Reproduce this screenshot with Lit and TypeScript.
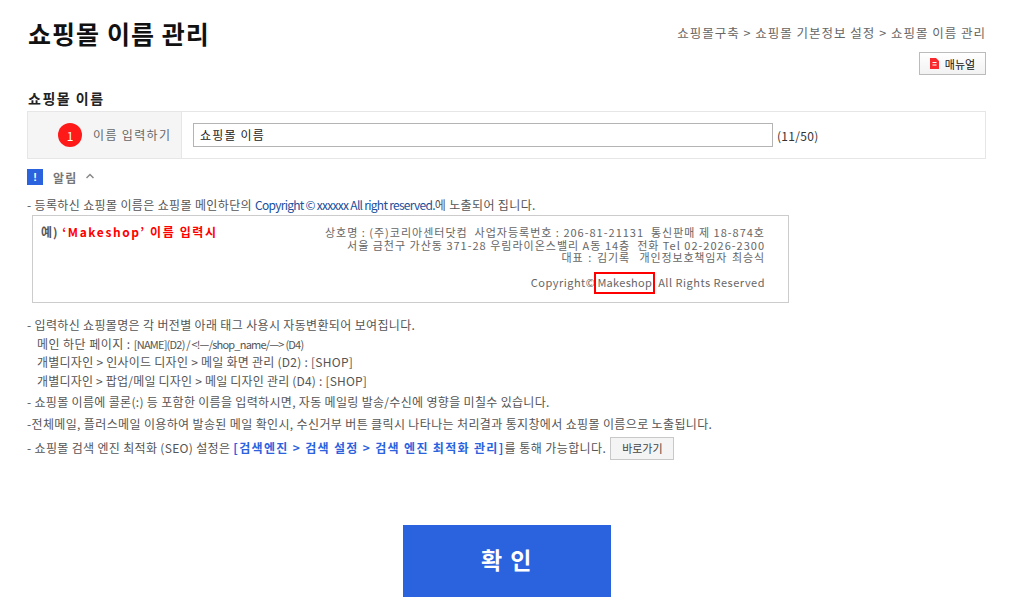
import { LitElement, html, css } from "lit";
import { customElement } from "lit/decorators.js";

@customElement("app-root")
export class AppRoot extends LitElement {
  static styles = css`
    :host { display: block; width: 1014px; height: 614px; overflow: hidden; background: #fff; font-family: "Noto Sans CJK KR", "Liberation Sans", sans-serif; color: #555; }
    .page { padding: 0 28px 0 27px; display: flex; flex-direction: column; }
    .head { display: flex; justify-content: space-between; align-items: flex-start; height: 88px; }
    h1 { margin: 14px 0 0 1px; font-size: 25px; line-height: 38px; font-weight: 700; color: #111; letter-spacing: 1.05px; white-space: nowrap; }
    .right { display: flex; flex-direction: column; align-items: flex-end; }
    .crumb { margin-top: 25px; font-size: 12.5px; line-height: 16px; color: #666; letter-spacing: 1px; white-space: nowrap; }
    .manual { margin-top: 11px; width: 67px; height: 23px; box-sizing: border-box; border: 1px solid #bbb; background: linear-gradient(#fff, #f2f2f2); display: flex; align-items: center; justify-content: center; gap: 6px; font-size: 11px; color: #111; }
    h2 { margin: 0 0 0 1px; font-size: 14px; line-height: 20px; font-weight: 700; color: #222; height: 23px; letter-spacing: 1.5px; }
    .row { display: flex; height: 48px; box-sizing: border-box; border: 1px solid #e6e6e6; }
    .label { width: 154px; box-sizing: border-box; background: #f5f5f5; border-right: 1px solid #e6e6e6; display: flex; align-items: center; padding-left: 30px; gap: 11px; font-size: 12px; color: #666; white-space: nowrap; letter-spacing: 1.35px; }
    .label span:last-child { padding-bottom: 2px; }
    .num { width: 24px; height: 24px; border-radius: 50%; background: #ff1a1a; color: #fff; font-size: 12px; display: flex; align-items: center; justify-content: center; flex: none; letter-spacing: 0; }
    .field { display: flex; align-items: center; padding-left: 11px; gap: 4px; font-size: 12px; color: #333; letter-spacing: 0.3px; }
    .input { width: 580px; height: 24px; box-sizing: border-box; border: 1px solid #b4b4b4; display: flex; align-items: center; padding: 0 0 2px 6px; font-size: 12px; color: #222; letter-spacing: 1.2px; }
    .notice { display: flex; align-items: center; height: 18px; margin-top: 9px; }
    .bang { width: 16px; height: 16px; background: #2b62de; color: #fff; font-size: 11px; font-weight: 700; display: flex; align-items: center; justify-content: center; font-family: "Liberation Sans", sans-serif; }
    .notice b { margin-left: 10px; font-size: 12px; color: #777; letter-spacing: 1.3px; }
    .notice svg { margin: 0 0 2px 8px; }
    .line { font-size: 12px; line-height: 19px; height: 19px; color: #555; white-space: nowrap; }
    .first { margin-top: 9px; letter-spacing: 0.36px; }
    .indent { padding-left: 10px; }
    .blue { color: #1a4f9c; letter-spacing: -0.72px; }
    .example { margin: 1px 0 0 5px; width: 757px; height: 88px; box-sizing: border-box; border: 1px solid #ccc; display: flex; justify-content: space-between; padding: 6px 23px 0 8px; }
    .eg { font-size: 12px; line-height: 20px; font-weight: 700; color: #555; white-space: nowrap; letter-spacing: 1px; }
    .eg span { color: #f00; letter-spacing: 1.6px; }
    .co { text-align: right; font-size: 11px; line-height: 12.5px; color: #666; padding-top: 4px; white-space: nowrap; letter-spacing: 1px; }
    .c3 { letter-spacing: 0.85px; word-spacing: 1.5px; }
    .cr { margin-top: 8px; display: flex; justify-content: flex-end; align-items: center; height: 22px; letter-spacing: 0.5px; }
    .mark { border: 2px solid #f00; height: 22px; box-sizing: border-box; padding: 0 1px; display: flex; align-items: center; margin: 0 3px 0 -1px; letter-spacing: 0.3px; }
    .notes { margin-top: 12px; display: flex; flex-direction: column; }
    .n1 { letter-spacing: 0.34px; }
    .n2 { letter-spacing: 0.45px; }
    .n2 .tight { font-size: 11px; letter-spacing: -0.78px; }
    .n3 { letter-spacing: 0.25px; margin-top: -1px; }
    .n4 { letter-spacing: 0.2px; }
    .n5 { letter-spacing: 0.32px; margin-top: 2px; }
    .n6 { letter-spacing: 0.36px; margin-top: 3px; }
    .n7 { letter-spacing: 0.33px; margin-top: 4px; }
    .n7 .after { letter-spacing: 0.42px; }
    .seo { color: #2b62de; font-weight: 700; letter-spacing: 1.33px; }
    .go { display: inline-flex; align-items: center; justify-content: center; width: 64px; height: 23px; box-sizing: border-box; border: 1px solid #c8c8c8; background: #f4f4f4; font-size: 11px; color: #444; margin: 0 0 2px 1px; vertical-align: middle; letter-spacing: 0; }
    .ok { align-self: flex-start; margin: 69px 0 0 376px; width: 208px; height: 72px; box-sizing: border-box; padding-bottom: 4px; background: #2b62de; color: #fff; font-size: 23px; font-weight: 700; display: flex; align-items: center; justify-content: center; letter-spacing: 1.5px; }
  `;

  render() {
    return html`<div class="page">
      <div class="head">
        <h1>쇼핑몰 이름 관리</h1>
        <div class="right">
          <div class="crumb">쇼핑몰구축 &gt; 쇼핑몰 기본정보 설정 &gt; 쇼핑몰 이름 관리</div>
          <div class="manual">
            <svg width="9" height="11" viewBox="0 0 9 11"><path d="M0 0H6L9 3V11H0Z" fill="#f8282c"/><path d="M2.5 4.5H6.5M2.5 7H6.5" stroke="#fff" stroke-width="1"/></svg>
            <span>매뉴얼</span>
          </div>
        </div>
      </div>
      <h2>쇼핑몰 이름</h2>
      <div class="row">
        <div class="label"><span class="num">1</span><span>이름 입력하기</span></div>
        <div class="field"><div class="input">쇼핑몰 이름</div><span>(11/50)</span></div>
      </div>
      <div class="notice">
        <span class="bang">!</span><b>알림</b>
        <svg width="8" height="6" viewBox="0 0 8 6"><path d="M0.5 5L4 1.5L7.5 5" fill="none" stroke="#888" stroke-width="1.5"/></svg>
      </div>
      <div class="line first">- 등록하신 쇼핑몰 이름은 쇼핑몰 메인하단의 <span class="blue">Copyright © xxxxxx All right reserved.</span>에 노출되어 집니다.</div>
      <div class="example">
        <div class="eg">예) <span>‘Makeshop’ 이름 입력시</span></div>
        <div class="co">
          <div>상호명 : (주)코리아센터닷컴 &nbsp;사업자등록번호 : 206-81-21131 &nbsp;통신판매 제 18-874호</div>
          <div>서울 금천구 가산동 371-28 우림라이온스밸리 A동 14층 &nbsp;전화 Tel 02-2026-2300</div>
          <div class="c3">대표 : 김기록 &nbsp;개인정보호책임자 최승식</div>
          <div class="cr">Copyright©<span class="mark">Makeshop</span> All Rights Reserved</div>
        </div>
      </div>
      <div class="notes">
        <div class="line n1">- 입력하신 쇼핑몰명은 각 버전별 아래 태그 사용시 자동변환되어 보여집니다.</div>
        <div class="line indent n2">메인 하단 페이지 : <span class="tight">[NAME](D2) / &lt;!—/shop_name/—&gt; (D4)</span></div>
        <div class="line indent n3">개별디자인 &gt; 인사이드 디자인 &gt; 메일 화면 관리 (D2) : [SHOP]</div>
        <div class="line indent n4">개별디자인 &gt; 팝업/메일 디자인 &gt; 메일 디자인 관리 (D4) : [SHOP]</div>
        <div class="line n5">- 쇼핑몰 이름에 콜론(:) 등 포함한 이름을 입력하시면, 자동 메일링 발송/수신에 영향을 미칠수 있습니다.</div>
        <div class="line n6">-전체메일, 플러스메일 이용하여 발송된 메일 확인시, 수신거부 버튼 클릭시 나타나는 처리결과 통지창에서 쇼핑몰 이름으로 노출됩니다.</div>
        <div class="line n7">- 쇼핑몰 검색 엔진 최적화 (SEO) 설정은 <span class="seo">[검색엔진 &gt; 검색 설정 &gt; 검색 엔진 최적화 관리]</span><span class="after">를 통해 가능합니다. </span><span class="go">바로가기</span></div>
      </div>
      <div class="ok">확 인</div>
    </div>`;
  }
}
